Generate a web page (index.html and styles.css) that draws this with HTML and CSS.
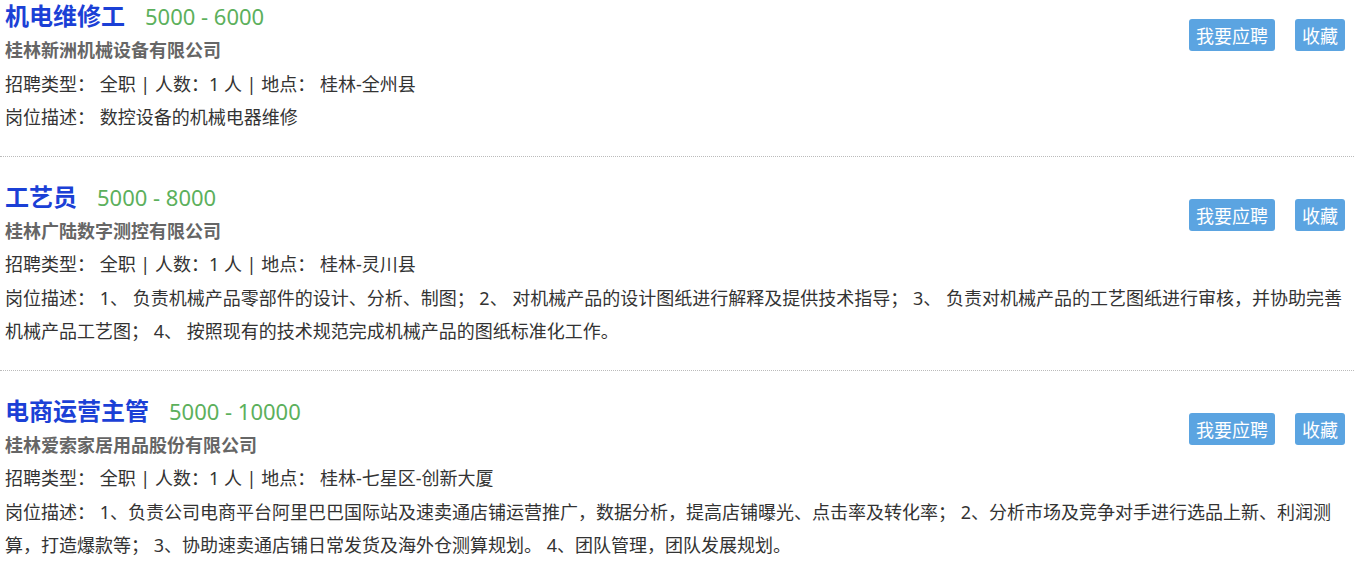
FILE: index.html
```
<!DOCTYPE html>
<html lang="zh-CN">
<head>
    <meta charset="UTF-8">
    <meta name="viewport" content="width=device-width, initial-scale=1.0">
    <title>招聘信息</title>
    <link rel="stylesheet" href="styles.css">
</head>
<body>
    <div class="job-list">
        <div class="job">
            <div class="job-head">
                <div class="job-main">
                    <h2 class="job-title">机电维修工<span class="salary">5000 - 6000</span></h2>
                    <div class="company">桂林新洲机械设备有限公司</div>
                </div>
                <div class="actions">
                    <button class="btn">我要应聘</button>
                    <button class="btn">收藏</button>
                </div>
            </div>
            <p class="info">招聘类型： 全职 | 人数：1 人 | 地点： 桂林-全州县</p>
            <p class="info">岗位描述： 数控设备的机械电器维修</p>
        </div>

        <div class="job">
            <div class="job-head">
                <div class="job-main">
                    <h2 class="job-title">工艺员<span class="salary">5000 - 8000</span></h2>
                    <div class="company">桂林广陆数字测控有限公司</div>
                </div>
                <div class="actions">
                    <button class="btn">我要应聘</button>
                    <button class="btn">收藏</button>
                </div>
            </div>
            <p class="info">招聘类型： 全职 | 人数：1 人 | 地点： 桂林-灵川县</p>
            <p class="info">岗位描述： 1、 负责机械产品零部件的设计、分析、制图； 2、 对机械产品的设计图纸进行解释及提供技术指导； 3、 负责对机械产品的工艺图纸进行审核，并协助完善机械产品工艺图； 4、 按照现有的技术规范完成机械产品的图纸标准化工作。</p>
        </div>

        <div class="job">
            <div class="job-head">
                <div class="job-main">
                    <h2 class="job-title">电商运营主管<span class="salary">5000 - 10000</span></h2>
                    <div class="company">桂林爱索家居用品股份有限公司</div>
                </div>
                <div class="actions">
                    <button class="btn">我要应聘</button>
                    <button class="btn">收藏</button>
                </div>
            </div>
            <p class="info">招聘类型： 全职 | 人数：1 人 | 地点： 桂林-七星区-创新大厦</p>
            <p class="info">岗位描述： 1、负责公司电商平台阿里巴巴国际站及速卖通店铺运营推广，数据分析，提高店铺曝光、点击率及转化率； 2、分析市场及竞争对手进行选品上新、利润测算，打造爆款等； 3、协助速卖通店铺日常发货及海外仓测算规划。 4、团队管理，团队发展规划。</p>
        </div>
    </div>
</body>
</html>
```

FILE: styles.css
```
body {
    margin: 0;
    padding: 0;
    background-color: #fff;
    font-family: "Noto Sans", "Noto Sans CJK SC", sans-serif;
    font-size: 18px;
    color: #333;
}
.job {
    padding: 22px 7px 21px 5px;
    border-bottom: 1px dotted #bbb;
}
.job:first-child {
    padding-top: 0;
    margin-top: -2px;
}
.job:last-child {
    border-bottom: none;
}
.job-head {
    display: flex;
    justify-content: space-between;
    align-items: center;
}
.job-title {
    margin: 0;
    font-size: 24px;
    line-height: 36px;
    font-weight: bold;
    color: #1b40d6;
}
.salary {
    margin-left: 20px;
    font-size: 22px;
    font-weight: normal;
    color: #5cb05c;
}
.company {
    line-height: 33.5px;
    font-weight: bold;
    color: #666;
}
.info {
    margin: 0;
    line-height: 33.5px;
}
.actions {
    display: flex;
    gap: 20px;
    margin-right: 2px;
    margin-top: 4px;
}
.btn {
    height: 32px;
    padding: 0 7px;
    border: none;
    border-radius: 3px;
    background-color: #5ba4e1;
    color: #fff;
    font-family: "Noto Sans", "Noto Sans CJK SC", sans-serif;
    font-size: 18px;
    cursor: pointer;
}
```
